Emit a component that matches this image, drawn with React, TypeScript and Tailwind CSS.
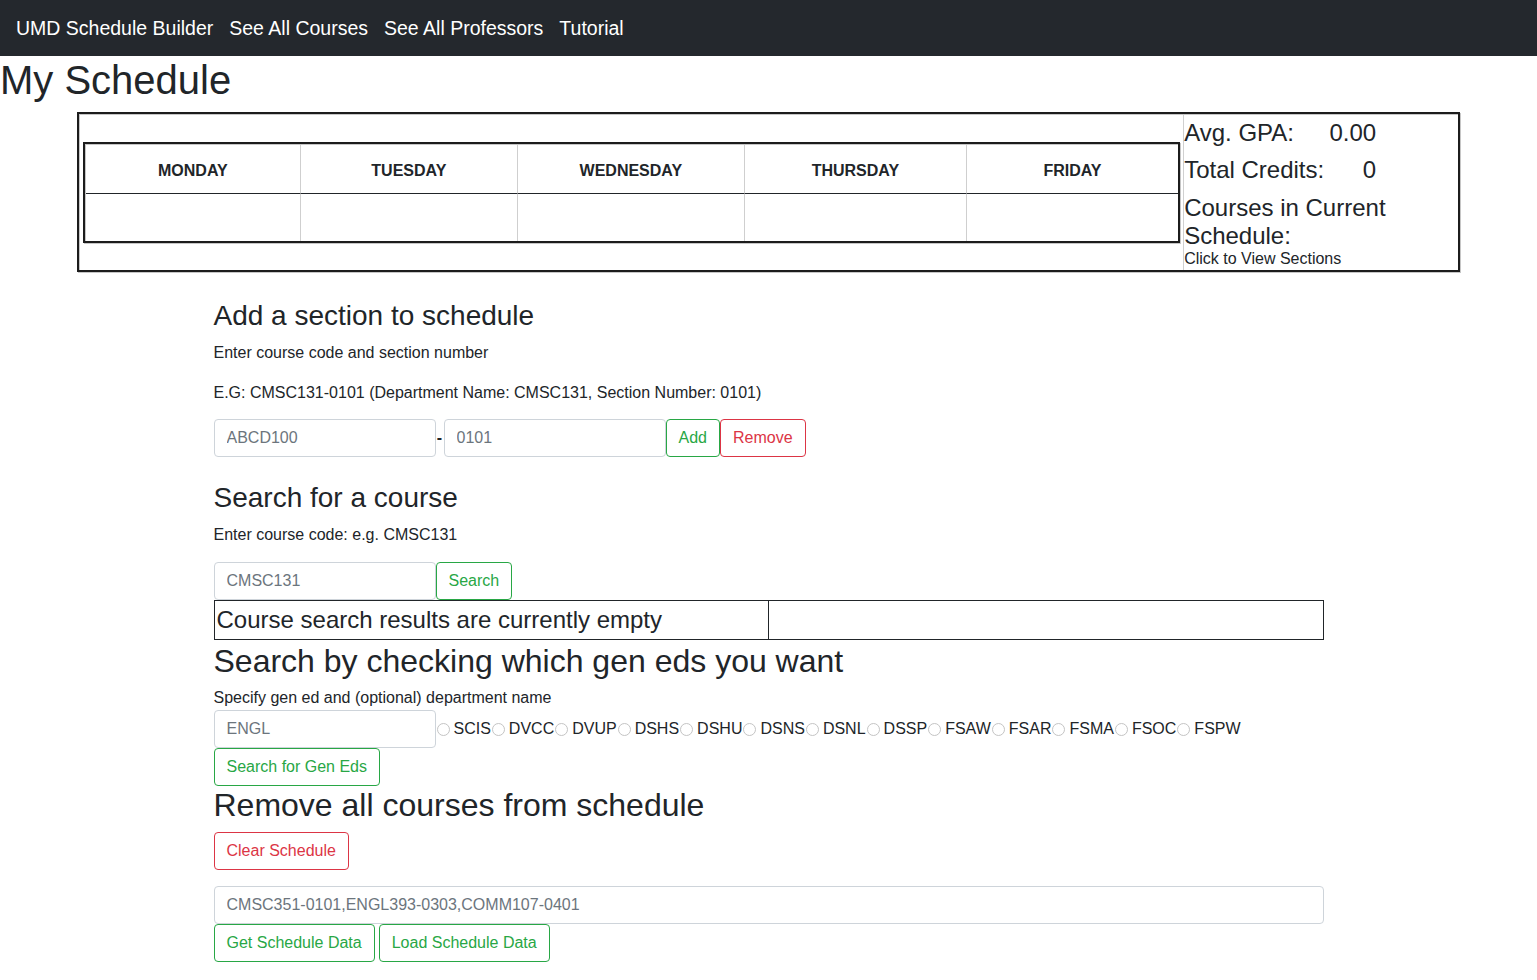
import React from 'react';

const days = ['MONDAY', 'TUESDAY', 'WEDNESDAY', 'THURSDAY', 'FRIDAY'];
const genEds = ['SCIS', 'DVCC', 'DVUP', 'DSHS', 'DSHU', 'DSNS', 'DSNL', 'DSSP', 'FSAW', 'FSAR', 'FSMA', 'FSOC', 'FSPW'];

const inputCls =
  'h-[38px] rounded-[4px] border border-[#ced4da] bg-white px-3 text-[16px] text-[#495057] placeholder:text-[#6c757d] outline-none';
const okBtn =
  'h-[38px] rounded-[4px] border border-[#28a745] bg-white px-3 text-[16px] text-[#28a745] leading-none';
const dangerBtn =
  'h-[38px] rounded-[4px] border border-[#dc3545] bg-white px-3 text-[16px] text-[#dc3545] leading-none';

function ScheduleTable() {
  return (
    <div className="border-2 border-[#1c1c1c] shadow-[1px_1px_0_#c6c6c6]">
      <div className="border-l border-t border-[#c6c6c6]">
        <div className="grid grid-cols-[215px_217px_227px_222px_1fr]">
          {days.map((d, i) => (
            <div
              key={d}
              className={`h-[49px] flex items-center justify-center pt-[3px] border-b border-[#212529] text-[16px] font-bold ${
                i < 4 ? 'border-r border-r-[#cfcfcf]' : ''
              }`}
            >
              {d}
            </div>
          ))}
          {days.map((d, i) => (
            <div key={d + '-row'} className={`h-[47px] ${i < 4 ? 'border-r border-[#cfcfcf]' : ''}`} />
          ))}
        </div>
      </div>
    </div>
  );
}

export default function App() {
  return (
    <div className="min-h-screen bg-white text-[#212529]" style={{ fontFamily: '"Liberation Sans", Arial, sans-serif' }}>
      {/* Navbar */}
      <nav className="h-14 bg-[#24282d] flex items-center px-4 pt-[2px] gap-4 text-white text-[19.5px]">
        <span>UMD Schedule Builder</span>
        <span>See All Courses</span>
        <span>See All Professors</span>
        <span>Tutorial</span>
      </nav>

      <h1 className="text-[40px] leading-[48px] font-medium mb-2">My Schedule</h1>

      {/* Schedule overview */}
      <div className="w-[90%] mx-auto border-2 border-[#1c1c1c] shadow-[1px_1px_0_#c6c6c6]">
        <div className="flex border-l border-t border-[#c6c6c6]">
          <div className="flex-1 flex items-center px-[3px]">
            <div className="w-full">
              <ScheduleTable />
            </div>
          </div>
          <div className="w-[275px] border-l border-[#d0d0d0] pb-[2px]">
            <div className="w-[192px]">
              <div className="h-[35px] flex items-center justify-between text-[24px]">
                <span>Avg. GPA:</span>
                <span>0.00</span>
              </div>
              <div className="h-[40px] flex items-center justify-between text-[24px]">
                <span>Total Credits:</span>
                <span>0</span>
              </div>
            </div>
            <div className="w-[210px] mt-[4px] text-[24px] leading-[28px]">Courses in Current Schedule:</div>
            <div className="text-[16px] leading-[18px]">Click to View Sections</div>
          </div>
        </div>
      </div>

      <div className="w-[1110px] mx-auto">
        {/* Add a section */}
        <h3 className="mt-[27px] mb-2 text-[28px] leading-[34px] font-medium">Add a section to schedule</h3>
        <p className="text-[16px] leading-6 mb-4">Enter course code and section number</p>
        <p className="text-[16px] leading-6 mb-[14px]">E.G: CMSC131-0101 (Department Name: CMSC131, Section Number: 0101)</p>
        <div className="flex items-center">
          <input className={`${inputCls} w-[222px]`} placeholder="ABCD100" />
          <span className="w-[8px] text-center font-bold">-</span>
          <input className={`${inputCls} w-[222px]`} placeholder="0101" />
          <button className={okBtn}>Add</button>
          <button className={dangerBtn}>Remove</button>
        </div>

        {/* Search for a course */}
        <h3 className="mt-[24px] mb-2 text-[28px] leading-[34px] font-medium">Search for a course</h3>
        <p className="text-[16px] leading-6 mb-[15px]">Enter course code: e.g. CMSC131</p>
        <div className="flex">
          <input className={`${inputCls} w-[222px]`} placeholder="CMSC131" />
          <button className={okBtn}>Search</button>
        </div>
        <div className="grid grid-cols-2 h-[40px] border border-[#212529]">
          <div className="border-r border-[#212529] pl-[2px] flex items-center text-[24px]">
            Course search results are currently empty
          </div>
          <div />
        </div>

        {/* Gen eds */}
        <h2 className="mt-[2px] mb-[6px] text-[32px] leading-[38px] font-medium">Search by checking which gen eds you want</h2>
        <p className="text-[16px] leading-6">Specify gen ed and (optional) department name</p>
        <div className="flex items-center">
          <input className={`${inputCls} w-[222px]`} placeholder="ENGL" />
          {genEds.map((g) => (
            <label key={g} className="flex items-center text-[16px]">
              <span className="ml-[1px] w-[13px] h-[13px] rounded-full border border-[#c4c4c4] bg-white" />
              <span className="ml-[4px]">{g}</span>
            </label>
          ))}
        </div>
        <button className={okBtn}>Search for Gen Eds</button>

        {/* Remove all */}
        <h2 className="mb-2 text-[32px] leading-[38px] font-medium">Remove all courses from schedule</h2>
        <button className={dangerBtn}>Clear Schedule</button>
        <input
          className={`${inputCls} mt-4 w-full block`}
          placeholder="CMSC351-0101,ENGL393-0303,COMM107-0401"
        />
        <div className="flex gap-1">
          <button className={okBtn}>Get Schedule Data</button>
          <button className={okBtn}>Load Schedule Data</button>
        </div>
      </div>
    </div>
  );
}
